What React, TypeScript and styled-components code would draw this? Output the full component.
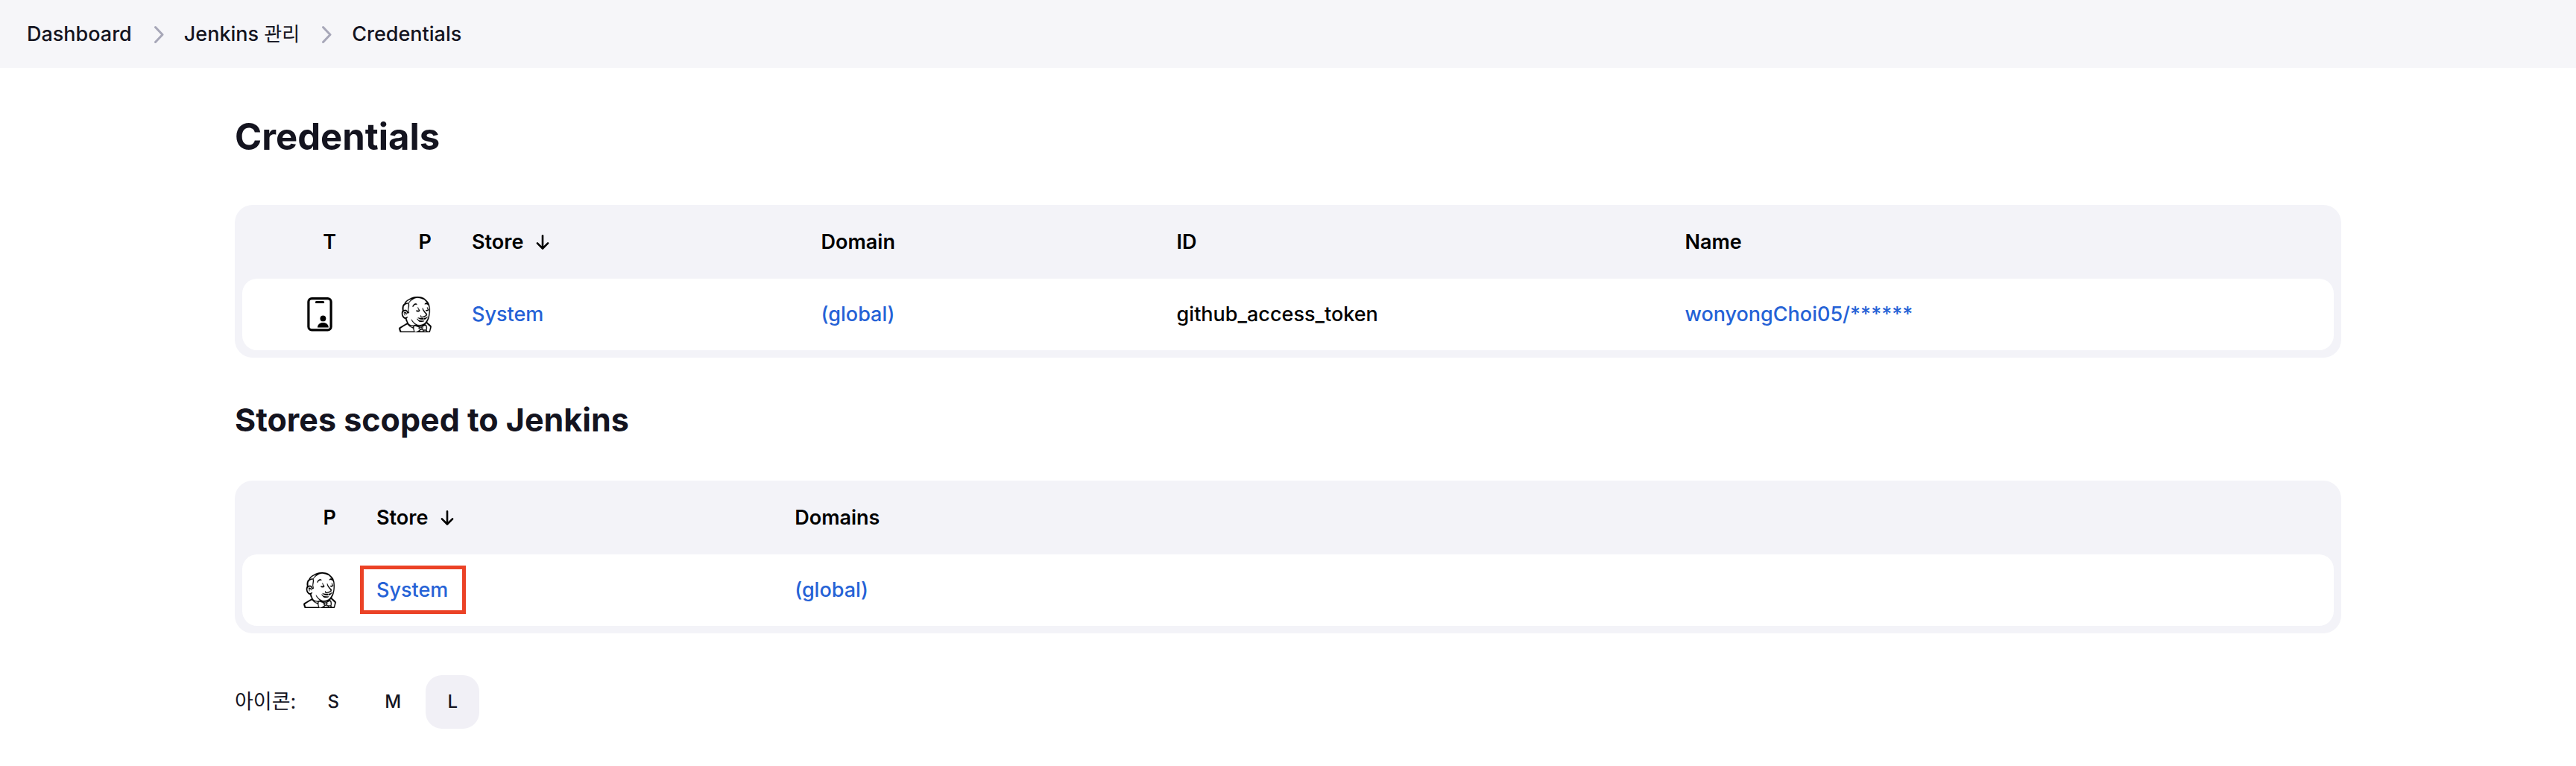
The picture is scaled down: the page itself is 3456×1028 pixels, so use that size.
import React, { useState } from "react";
import styled, { createGlobalStyle } from "styled-components";
import { SiJenkins } from "react-icons/si";

const GlobalStyle = createGlobalStyle`
  *, *::before, *::after { box-sizing: border-box; }
  body {
    margin: 0;
    background: #ffffff;
    color: #14141f;
    font-family: Inter, "Noto Sans CJK KR", sans-serif;
    font-size: 27px;
    line-height: 36px;
  }
`;

const Breadcrumbs = styled.nav`
  background: #f6f6f9;
  padding: 28px 36px 27px;
`;

const CrumbList = styled.ol`
  display: flex;
  align-items: center;
  gap: 26px;
  margin: 0;
  padding: 0;
  list-style: none;
`;

const Crumb = styled.li`
  display: flex;
  align-items: center;
  gap: 26px;
`;

const CrumbLink = styled.a`
  color: #14141f;
  font-weight: 500;
  text-decoration: none;
`;

const Hangul = styled.span`
  font-size: 26px;
  font-weight: 400;
`;

const Main = styled.main`
  padding: 61px 315px 50px;
`;

const PageTitle = styled.h1`
  margin: 0 0 59px;
  font-size: 49px;
  line-height: 64px;
  font-weight: 700;
`;

const SectionTitle = styled.h2`
  margin: 55px 0 54px;
  font-size: 43px;
  line-height: 56px;
  font-weight: 700;
`;

const TableFrame = styled.div`
  padding: 0 10px 10px;
  border-radius: 24px;
  background: #f3f3f8;
`;

const Table = styled.table`
  width: 100%;
  table-layout: fixed;
  border-collapse: separate;
  border-spacing: 0;
  color: #000000;
`;

const Col = styled.col<{ $width?: string }>`
  width: ${(p) => p.$width ?? "auto"};
`;

const HeadCell = styled.th<{ $icon?: boolean }>`
  height: 99px;
  padding: 0 ${(p) => (p.$icon ? "28px" : "26px")};
  font-weight: 600;
  text-align: ${(p) => (p.$icon ? "right" : "left")};
`;

const Cell = styled.td<{ $icon?: boolean }>`
  height: 96px;
  padding: 0 26px;
  background: #ffffff;
  font-weight: 500;
  text-align: ${(p) => (p.$icon ? "right" : "left")};

  &:first-child { border-radius: 20px 0 0 20px; }
  &:last-child { border-radius: 0 20px 20px 0; }
  svg { display: block; margin-left: auto; }
`;

const SortButton = styled.button`
  display: inline-flex;
  align-items: center;
  gap: 16px;
  padding: 0;
  border: 0;
  background: none;
  color: inherit;
  font: inherit;
  cursor: pointer;
`;

const TableLink = styled.a<{ $marked?: boolean }>`
  position: relative;
  color: #2562d6;
  text-decoration: none;

  &::after {
    content: "";
    display: ${(p) => (p.$marked ? "block" : "none")};
    position: absolute;
    inset: -16px -24px -16px -22px;
    border: 5px solid #eb4226;
    pointer-events: none;
  }
`;

const SizeBar = styled.div`
  display: flex;
  align-items: center;
  gap: 8px;
  margin-top: 56px;
`;

const SizeLabel = styled.span`
  margin-right: 6px;
`;

const SizeButton = styled.button<{ $active: boolean }>`
  width: 72px;
  height: 72px;
  padding: 0;
  border: 0;
  border-radius: 22px;
  background: ${(p) => (p.$active ? "#f1f0f6" : "transparent")};
  color: #14141f;
  font: inherit;
  font-size: 24px;
  font-weight: 500;
  cursor: pointer;
`;

const Chevron = () => (
  <svg width="18" height="24" viewBox="0 0 18 24" fill="none" aria-hidden="true">
    <path d="M5.5 2.5 15 12.5 5.5 22.5" stroke="#a7a7b8" strokeWidth="3" strokeLinecap="round" strokeLinejoin="round" />
  </svg>
);

const ArrowDown = () => (
  <svg width="20" height="22" viewBox="0 0 20 22" fill="none" aria-hidden="true">
    <path d="M10 2.3v17M2.9 12.4l7.1 7.1 7.1-7.1" stroke="#000" strokeWidth="2.6" strokeLinecap="round" strokeLinejoin="round" />
  </svg>
);

const CredentialIcon = () => (
  <svg width="48" height="48" viewBox="0 0 48 48" role="img" aria-label="Username with password">
    <rect x="8.9" y="2.7" width="30.2" height="42.2" rx="4.4" fill="none" stroke="#000" strokeWidth="3.2" />
    <path d="M19.4 7.5h9.2" stroke="#000" strokeWidth="3" strokeLinecap="round" />
    <circle cx="28.4" cy="29.4" r="3.9" />
    <path d="M21 41.6c0-4.3 3.1-6.7 7.4-6.7s7.4 2.4 7.4 6.7z" />
  </svg>
);

const ProviderIcon = () => (
  <SiJenkins size={48} stroke="currentColor" strokeWidth={0.15} role="img" aria-label="Jenkins" />
);

const SortHead = () => (
  <HeadCell scope="col" aria-sort="descending">
    <SortButton type="button">
      Store
      <ArrowDown />
    </SortButton>
  </HeadCell>
);

export default function App() {
  const [size, setSize] = useState("L");

  return (
    <>
      <GlobalStyle />
      <Breadcrumbs aria-label="Breadcrumbs">
        <CrumbList>
          <Crumb>
            <CrumbLink href="#dashboard">Dashboard</CrumbLink>
            <Chevron />
          </Crumb>
          <Crumb>
            <CrumbLink href="#manage">Jenkins <Hangul>관리</Hangul></CrumbLink>
            <Chevron />
          </Crumb>
          <Crumb>
            <CrumbLink href="#credentials">Credentials</CrumbLink>
          </Crumb>
        </CrumbList>
      </Breadcrumbs>
      <Main>
        <PageTitle>Credentials</PageTitle>
        <TableFrame>
          <Table>
            <colgroup>
              <Col $width="154px" />
              <Col $width="128px" />
              <Col $width="16.7%" />
              <Col $width="17%" />
              <Col $width="24.3%" />
              <Col />
            </colgroup>
            <thead>
              <tr>
                <HeadCell scope="col" $icon>T</HeadCell>
                <HeadCell scope="col" $icon>P</HeadCell>
                <SortHead />
                <HeadCell scope="col">Domain</HeadCell>
                <HeadCell scope="col">ID</HeadCell>
                <HeadCell scope="col">Name</HeadCell>
              </tr>
            </thead>
            <tbody>
              <tr>
                <Cell $icon><CredentialIcon /></Cell>
                <Cell $icon><ProviderIcon /></Cell>
                <Cell><TableLink href="#system">System</TableLink></Cell>
                <Cell><TableLink href="#global">(global)</TableLink></Cell>
                <Cell>github_access_token</Cell>
                <Cell><TableLink href="#credential">wonyongChoi05/******</TableLink></Cell>
              </tr>
            </tbody>
          </Table>
        </TableFrame>
        <SectionTitle>Stores scoped to Jenkins</SectionTitle>
        <TableFrame>
          <Table>
            <colgroup>
              <Col $width="154px" />
              <Col $width="20%" />
              <Col />
            </colgroup>
            <thead>
              <tr>
                <HeadCell scope="col" $icon>P</HeadCell>
                <SortHead />
                <HeadCell scope="col">Domains</HeadCell>
              </tr>
            </thead>
            <tbody>
              <tr>
                <Cell $icon><ProviderIcon /></Cell>
                <Cell><TableLink href="#store-system" $marked>System</TableLink></Cell>
                <Cell><TableLink href="#store-global">(global)</TableLink></Cell>
              </tr>
            </tbody>
          </Table>
        </TableFrame>
        <SizeBar role="group" aria-labelledby="icon-size">
          <SizeLabel id="icon-size">아이콘:</SizeLabel>
          {["S", "M", "L"].map((name) => (
            <SizeButton
              key={name}
              type="button"
              $active={size === name}
              aria-pressed={size === name}
              onClick={() => setSize(name)}
            >
              {name}
            </SizeButton>
          ))}
        </SizeBar>
      </Main>
    </>
  );
}
